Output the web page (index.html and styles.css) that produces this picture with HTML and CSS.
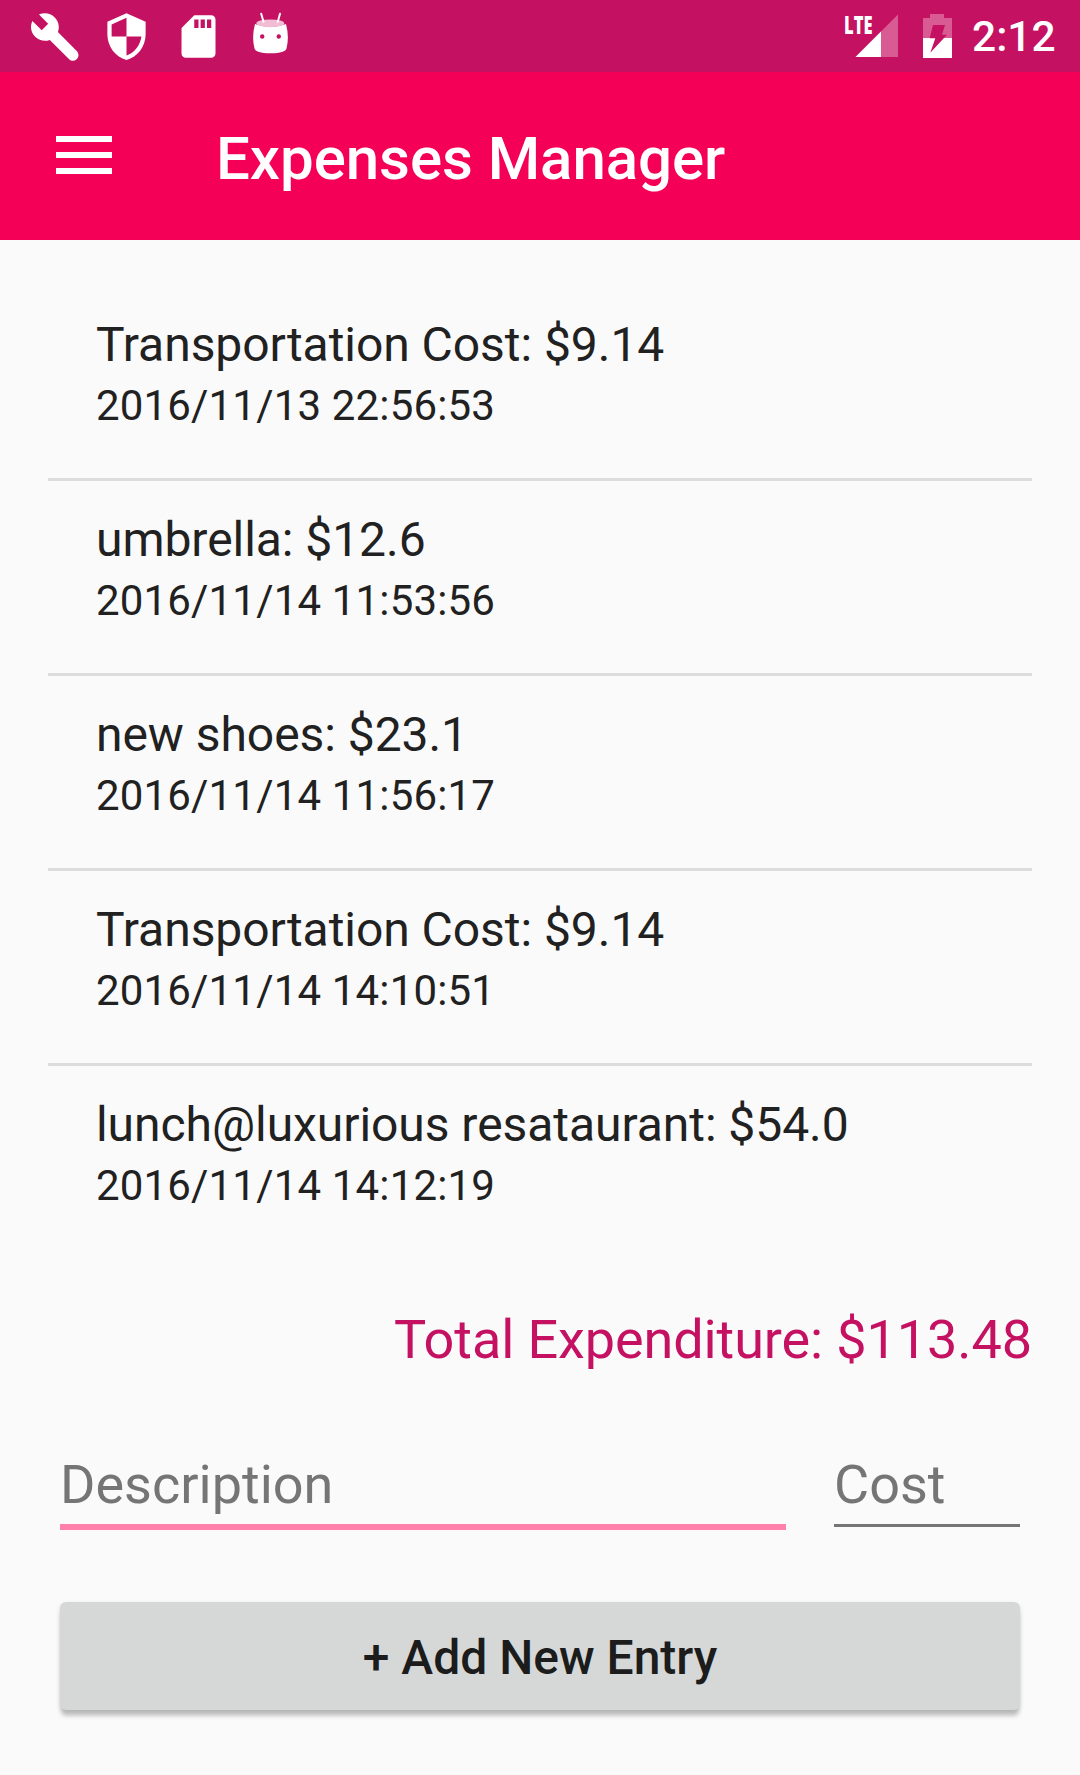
FILE: index.html
```html
<!DOCTYPE html>
<html lang="en">
<head>
<meta charset="utf-8">
<title>Expenses Manager</title>
<link rel="stylesheet" href="styles.css">
</head>
<body>
<header class="status-bar">
  <div class="status-left">
    <svg class="status-icon" viewBox="0 0 24 24"><path d="M22.7 19l-9.1-9.1c.9-2.3.4-5-1.5-6.9-2-2-5-2.4-7.4-1.3L9 6 6 9 1.6 4.7C.4 7.1.9 10.1 2.9 12.1c1.9 1.9 4.6 2.4 6.9 1.5l9.1 9.1c1.1 1 2.4.9 3.4.1 1.2-1 1.3-2.5.4-3.8z"/></svg>
    <svg class="status-icon" viewBox="0 0 24 24"><path d="M12 1L3 5v6c0 5.55 3.84 10.74 9 12 5.16-1.26 9-6.45 9-12V5l-9-4zm0 10.99h7c-.53 4.12-3.28 7.79-7 8.94V12H5V6.3l7-3.11v8.8z"/></svg>
    <svg class="status-icon" viewBox="0 0 24 24"><path d="M18 2h-8L4.02 8 4 20c0 1.1.9 2 2 2h12c1.1 0 2-.9 2-2V4c0-1.1-.9-2-2-2zm-6 6h-2V4h2v4zm3 0h-2V4h2v4zm3 0h-2V4h2v4z"/></svg>
    <svg class="status-icon" viewBox="0 0 51 51">
      <path d="M10 13Q25.500 19 41 13Q44.500 26 41.500 37.500Q40.500 42 25.500 42.300Q10.500 42 9.500 37.500Q6.500 26 10 13Z"/>
      <ellipse class="robot-lid" cx="25.300" cy="12.300" rx="14" ry="3.900"/>
      <path class="antenna" d="M16.200 2.800l2.300 8M35 2.800l-2.200 8"/>
      <circle class="robot-eye" cx="17.200" cy="25.500" r="2.200"/><circle class="robot-eye" cx="33.800" cy="25.500" r="2.200"/>
    </svg>
  </div>
  <div class="status-right">
    <svg class="signal" viewBox="0 0 56 48"><path class="dim" d="M53 2.500V45H10.500z"/><path d="M36 19.500V45H10.500z"/><text class="lte" x="-1" y="21.500" textLength="28.500" lengthAdjust="spacingAndGlyphs">LTE</text></svg>
    <svg class="battery" viewBox="0 0 29 44"><path class="dim" d="M7 0h14v4h8v20H0V4h7z"/><path d="M0 24h29v20H0z"/><path class="bolt" d="M10 11h12l-3 9.700h5L7.300 38.700l5-14.400H6.700z"/></svg>
    <span class="clock">2:12</span>
  </div>
</header>
<div class="toolbar">
  <svg class="menu-icon" viewBox="0 0 56 38"><path d="M0 0h56v6H0zM0 16h56v6H0zM0 32h56v6H0z"/></svg>
  <h1 class="title">Expenses Manager</h1>
</div>
<main class="content">
  <ul class="entries">
    <li class="entry"><span class="entry-name">Transportation Cost: $9.14</span><span class="entry-date">2016/11/13 22:56:53</span></li>
    <li class="entry"><span class="entry-name">umbrella: $12.6</span><span class="entry-date">2016/11/14 11:53:56</span></li>
    <li class="entry"><span class="entry-name">new shoes: $23.1</span><span class="entry-date">2016/11/14 11:56:17</span></li>
    <li class="entry"><span class="entry-name">Transportation Cost: $9.14</span><span class="entry-date">2016/11/14 14:10:51</span></li>
    <li class="entry"><span class="entry-name">lunch@luxurious resataurant: $54.0</span><span class="entry-date">2016/11/14 14:12:19</span></li>
  </ul>
  <p class="total">Total Expenditure: $113.48</p>
  <form class="entry-form">
    <input class="field field-active" type="text" placeholder="Description" aria-label="Description">
    <input class="field" type="text" placeholder="Cost" aria-label="Cost">
    <button class="add-button" type="button">+ Add New Entry</button>
  </form>
</main>
</body>
</html>
```
FILE: styles.css
```css
* { box-sizing: border-box; }
body {
  margin: 0;
  height: 1775px;
  overflow: hidden;
  background: #fafafa;
  color: #212121;
  font-family: Roboto, "Liberation Sans", sans-serif;
}
.status-bar {
  display: flex;
  justify-content: space-between;
  height: 72px;
  padding: 0 24px 0 28.5px;
  background: #c51162;
  color: #fff;
}
.status-left { display: flex; align-items: center; gap: 21px; }
.status-right { display: flex; align-items: center; }
.status-icon { width: 51px; height: 51px; fill: #fff; }
.robot-lid { fill: #f0bdd5; }
.robot-eye, .bolt { fill: #c51162; }
.antenna { fill: none; stroke: #fff; stroke-width: 2; stroke-linecap: round; }
.dim { fill: #d95b93; }
.signal { width: 56px; height: 48px; margin-right: 22px; fill: #fff; overflow: visible; }
.lte { font: 800 25px "Open Sans", sans-serif; }
.battery { width: 29px; height: 44px; margin-right: 20px; fill: #fff; }
.clock { width: 84px; font-size: 42.5px; font-weight: 500; line-height: 50px; padding-top: 2px; white-space: nowrap; }
.toolbar {
  display: flex;
  align-items: center;
  gap: 104px;
  height: 168px;
  padding: 0 56px;
  background: #f50057;
  color: #fff;
}
.menu-icon { width: 56px; height: 38px; margin-bottom: 2px; fill: #fff; }
.title { margin: 5px 0 0; font-size: 60px; font-weight: 500; line-height: 71px; letter-spacing: -.05px; }
.content { padding: 46px 48px 0; }
.entries { margin: 0; padding: 0; list-style: none; }
.entry {
  display: flex;
  flex-direction: column;
  gap: 8px;
  height: 195px;
  padding: 31px 48px 0;
  border-bottom: 3px solid #dcdcdc;
}
.entry:last-child { border-bottom: 0; }
.entry-name { font-size: 48px; line-height: 56px; letter-spacing: -.05px; }
.entry-date { font-size: 42px; line-height: 50px; letter-spacing: .17px; }
.total {
  margin: 47px 0 0;
  color: #c51162;
  font-size: 54px;
  line-height: 64px;
  letter-spacing: -.1px;
  text-align: right;
}
.entry-form {
  display: grid;
  grid-template-columns: 726px 186px;
  column-gap: 48px;
  padding: 80px 12px 0;
}
.field {
  width: 100%;
  height: 75px;
  margin: 0;
  padding: 0 0 8px;
  border: 0;
  border-bottom: 3px solid #757575;
  border-radius: 0;
  outline: 0;
  background: transparent;
  font: 54px/64px Roboto, sans-serif;
}
.field::placeholder { color: #757575; opacity: 1; }
.field-active { height: 78px; border-bottom: 6px solid #ff80ab; }
.add-button {
  grid-column: 1 / -1;
  height: 108px;
  margin-top: 72px;
  padding: 4px 0 0;
  border: 0;
  border-radius: 6px;
  background: #d6d8d7;
  color: #1c1c1c;
  box-shadow: 0 7px 4px -1px rgba(0, 0, 0, .2), 0 2px 5px rgba(0, 0, 0, .12);
  font: 500 48px/56px Roboto, sans-serif;
}
```
